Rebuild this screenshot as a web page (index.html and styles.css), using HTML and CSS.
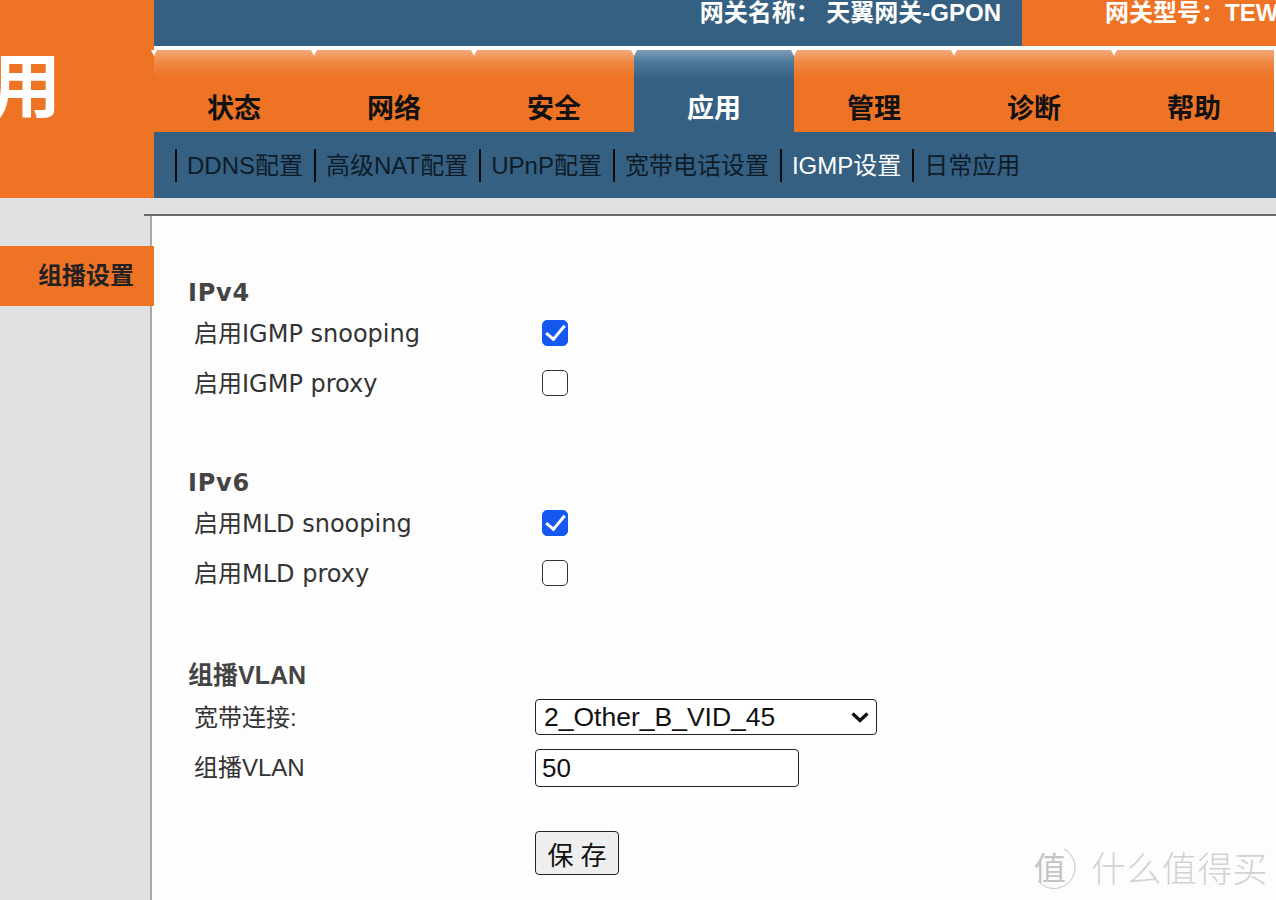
FILE: index.html
```html
<!DOCTYPE html>
<html lang="zh-CN">
<head>
    <meta charset="UTF-8">
    <meta name="viewport" content="width=device-width, initial-scale=1.0">
    <title>天翼网关</title>
    <link rel="stylesheet" href="styles.css">
</head>
<body>
    <div class="header">
        <div class="logo"><span>应用</span></div>
        <div class="header-right">
            <div class="info-bar">
                <div class="info-name">网关名称：&nbsp;天翼网关-GPON</div>
                <div class="info-model">网关型号：TEW-GPON</div>
            </div>
            <div class="tabs">
                <a class="tab" href="#">状态</a>
                <a class="tab" href="#">网络</a>
                <a class="tab" href="#">安全</a>
                <a class="tab active" href="#">应用</a>
                <a class="tab" href="#">管理</a>
                <a class="tab" href="#">诊断</a>
                <a class="tab" href="#">帮助</a>
            </div>
            <div class="subnav">
                <a href="#">DDNS配置</a>
                <a href="#">高级NAT配置</a>
                <a href="#">UPnP配置</a>
                <a href="#">宽带电话设置</a>
                <a class="current" href="#">IGMP设置</a>
                <a href="#">日常应用</a>
            </div>
        </div>
    </div>

    <div class="rule-wrap"><div class="rule"></div></div>

    <div class="main">
        <div class="sidebar">
            <a class="side-item" href="#">组播设置</a>
        </div>
        <form class="panel">
            <h3 class="title">IPv4</h3>
            <label class="row">
                <span class="name">启用IGMP snooping</span>
                <input class="check" type="checkbox" checked>
            </label>
            <label class="row">
                <span class="name">启用IGMP proxy</span>
                <input class="check" type="checkbox">
            </label>

            <h3 class="title second">IPv6</h3>
            <label class="row">
                <span class="name">启用MLD snooping</span>
                <input class="check" type="checkbox" checked>
            </label>
            <label class="row">
                <span class="name">启用MLD proxy</span>
                <input class="check" type="checkbox">
            </label>

            <h3 class="title third">组播VLAN</h3>
            <div class="row plain">
                <span class="name">宽带连接:</span>
                <div class="select-wrap">
                    <select class="select">
                        <option>2_Other_B_VID_45</option>
                    </select>
                    <svg class="chevron" viewBox="0 0 20 12" width="20" height="12">
                        <path d="M2.5 2.5l7.5 7 7.500-7" fill="none" stroke="#111" stroke-width="3.400"/>
                    </svg>
                </div>
            </div>
            <div class="row plain">
                <span class="name">组播VLAN</span>
                <input class="text-input" type="text" value="50">
            </div>
            <div class="actions">
                <button class="save" type="button">保 存</button>
            </div>
        </form>
    </div>

    <div class="watermark">
        <svg viewBox="0 0 44 44" width="44" height="44">
            <path d="M32 4A21 21 0 1 1 6 36" fill="none" stroke="#c4c4c6" stroke-width="1"/>
        </svg>
        <span class="wm-circle">值</span>
        <span class="wm-text">什么值得买</span>
    </div>
</body>
</html>
```

FILE: styles.css
```css
* {
    margin: 0;
    padding: 0;
    box-sizing: border-box;
}

html, body {
    height: 900px;
    overflow: hidden;
}

body {
    background-color: #e1e1e3;
    font-family: "Liberation Sans", "Noto Sans CJK SC", sans-serif;
    color: #222;
}

a {
    text-decoration: none;
}

.header {
    display: flex;
    height: 198px;
}

.logo {
    width: 154px;
    flex: none;
    display: flex;
    justify-content: flex-end;
    padding: 46px 93px 0 0;
    overflow: hidden;
    background-color: #ee7325;
    color: #fff;
    font-size: 70px;
    font-weight: bold;
    line-height: 84px;
    white-space: nowrap;
}

.header-right {
    flex: 1;
    min-width: 0;
    background-color: #356082;
}

/* top strip */
.info-bar {
    display: flex;
    height: 46px;
    font-size: 24px;
    font-weight: bold;
    line-height: 26px;
    color: #fff;
    white-space: nowrap;
}

.info-name {
    flex: 1;
    text-align: right;
    padding-right: 21px;
}

.info-model {
    width: 254px;
    padding-left: 83px;
    overflow: hidden;
    background-color: #ee7325;
}

/* main tabs */
.tabs {
    display: flex;
    height: 86px;
    padding-top: 4px;
    background-color: #fff;
}

.tab {
    position: relative;
    width: 160px;
    height: 82px;
    padding-top: 41px;
    text-align: center;
    font-size: 27px;
    font-weight: bold;
    line-height: 36px;
    color: #111;
    background: linear-gradient(#f3a878 0, #ef8a45 12px, #ee7325 28px, #ee7325 100%);
}

/* little white notch between two tabs */
.tab::after {
    content: "";
    position: absolute;
    top: 0;
    left: -3px;
    z-index: 1;
    border-left: 3px solid transparent;
    border-right: 3px solid transparent;
    border-top: 6px solid #fff;
}

.tab.active {
    color: #fff;
    background: linear-gradient(#7f9db6 0, #4f7a9c 12px, #356082 30px, #356082 100%);
}

.subnav {
    display: flex;
    align-items: center;
    height: 66px;
    padding-left: 21px;
    font-size: 24px;
    line-height: 33px;
}

.subnav a {
    padding: 0 11px 0 10px;
    border-left: 2px solid #0c0c0c;
    color: #0f1c28;
    white-space: nowrap;
}

.subnav a.current {
    color: #fff;
}

/* body area */
.rule-wrap {
    height: 18px;
    padding: 16px 0 0 144px;
}

.rule {
    height: 2px;
    background-color: #6a6a6a;
}

.main {
    display: flex;
    height: 684px;
}

.sidebar {
    width: 150px;
    flex: none;
    padding-top: 30px;
}

.side-item {
    position: relative;
    z-index: 1;
    display: block;
    width: 154px;
    height: 60px;
    padding-right: 20px;
    text-align: right;
    font-size: 24px;
    font-weight: bold;
    line-height: 60px;
    color: #222;
    background-color: #ee7325;
}

.panel {
    flex: 1;
    padding: 62px 0 0 36px;
    border-left: 2px solid #a9a9ab;
    background-color: #fdfdfe;
}

.title {
    height: 30px;
    font-family: "DejaVu Sans", "Noto Sans CJK SC", sans-serif;
    font-size: 24px;
    font-weight: bold;
    letter-spacing: 0.8px;
    line-height: 30px;
    color: #444;
}

.title.second {
    margin-top: 60px;
}

.title.third {
    margin-top: 62px;
    font-family: "Liberation Sans", "Noto Sans CJK SC", sans-serif;
    font-size: 25px;
    letter-spacing: 0;
}

.row {
    display: flex;
    align-items: center;
    height: 50px;
    padding-left: 6px;
    font-family: "DejaVu Sans", "Noto Sans CJK SC", sans-serif;
    font-size: 24px;
    color: #333;
}

.row.plain {
    font-family: "Liberation Sans", "Noto Sans CJK SC", sans-serif;
}

.title.third + .row {
    margin-top: 2px;
}

.name {
    width: 341px;
    flex: none;
    margin-bottom: 4px;
}

.check {
    width: 26px;
    height: 26px;
    margin-left: 7px;
    appearance: none;
    position: relative;
    border: 1.5px solid #333;
    border-radius: 5px;
    background-color: #fff;
}

.check:checked {
    border-color: #1558f0;
    background-color: #1558f0;
}

.check:checked::after {
    content: "";
    position: absolute;
    left: 7px;
    top: 0;
    width: 8px;
    height: 16px;
    border-right: 3.5px solid #fff;
    border-bottom: 3.5px solid #fff;
    transform: rotate(40deg);
}

.select-wrap {
    position: relative;
    width: 342px;
    height: 36px;
}

.select {
    width: 100%;
    height: 100%;
    padding-left: 8px;
    appearance: none;
    border: 1px solid #222;
    border-radius: 4px;
    background-color: #fff;
    font-family: "Liberation Sans", sans-serif;
    font-size: 26.500px;
    color: #111;
}

.chevron {
    position: absolute;
    top: 12px;
    right: 7px;
}

.text-input {
    width: 264px;
    height: 38px;
    margin-top: 2px;
    padding-left: 6px;
    border: 1px solid #222;
    border-radius: 4px;
    background-color: #fff;
    font-family: "Liberation Sans", sans-serif;
    font-size: 26px;
    color: #111;
}

.actions {
    padding: 39px 0 0 347px;
}

.save {
    width: 84px;
    height: 44px;
    border: 1px solid #222;
    border-radius: 4px;
    background-color: #efefef;
    font-family: "Liberation Sans", "Noto Sans CJK SC", sans-serif;
    font-size: 26px;
    color: #111;
}

/* watermark over the corner */
.watermark {
    position: absolute;
    left: 1032px;
    top: 845px;
    display: flex;
    align-items: center;
    height: 44px;
    font-family: "Noto Sans CJK SC", sans-serif;
    color: #d2d2d4;
}

.wm-circle {
    position: absolute;
    left: 2px;
    top: 0;
    font-size: 32px;
    line-height: 42px;
    color: #c4c4c6;
}

.wm-text {
    margin-left: 15px;
    font-size: 35px;
    font-weight: 300;
    letter-spacing: 0.4px;
    line-height: 44px;
    white-space: nowrap;
}
```
